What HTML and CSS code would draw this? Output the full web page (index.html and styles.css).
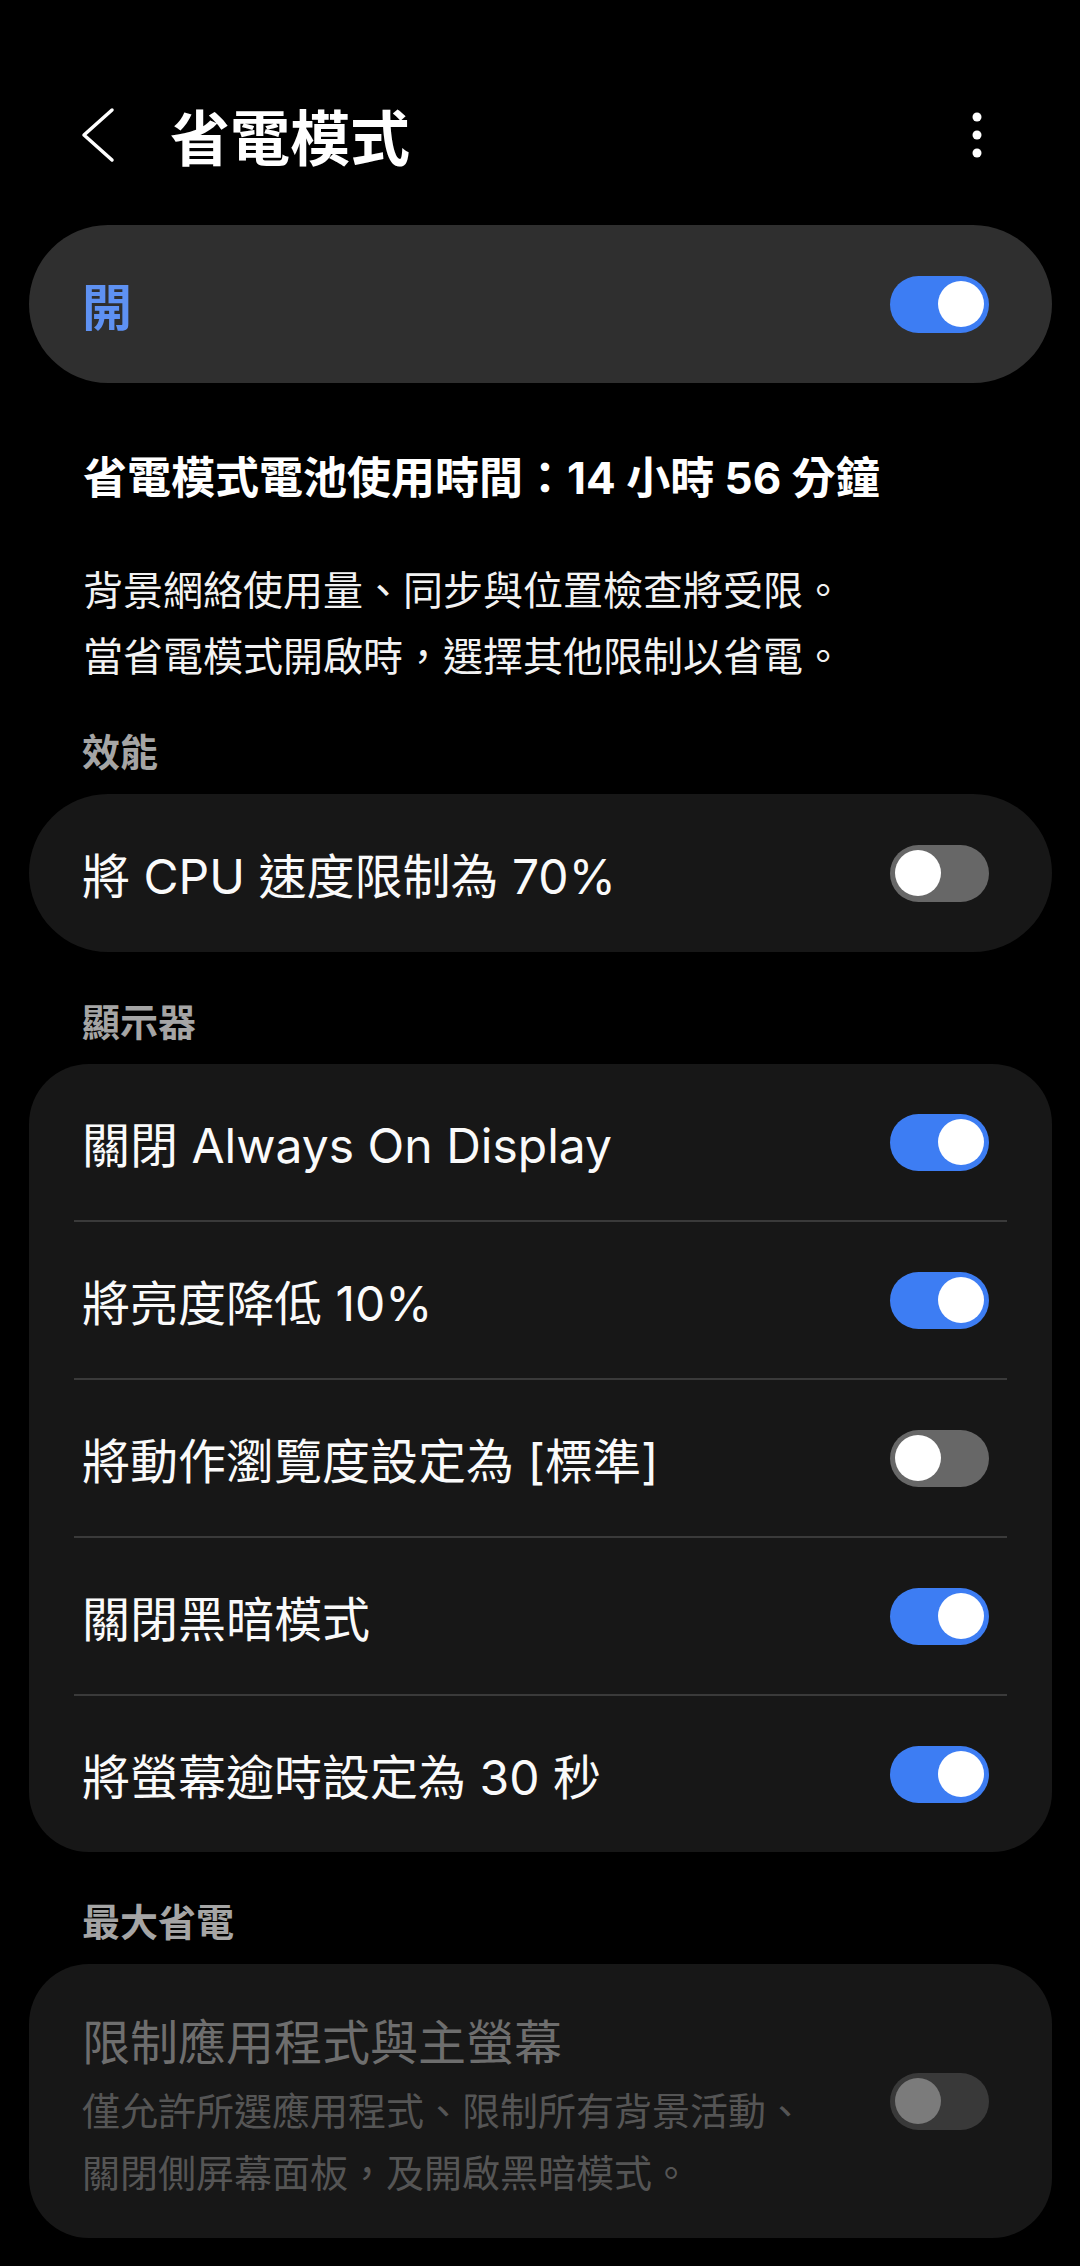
FILE: index.html
```html
<html>

<head>
  <meta name="viewport" content="width=device-width, initial-scale=1">
  <link rel="stylesheet" href="styles.css">
</head>

<body>
  <div class="screen">
    <!-- App bar -->
    <header class="app-bar">
      <svg class="back" width="36" height="56" viewBox="0 0 36 56">
        <polyline points="32,3 4,28 32,53" fill="none" stroke="#fff" stroke-width="3.5" stroke-linecap="round" stroke-linejoin="round" />
      </svg>
      <h1 class="title">省電模式</h1>
      <svg class="more" width="10" height="46" viewBox="0 0 10 46">
        <circle cx="5" cy="5" r="4.5" fill="#fff" />
        <circle cx="5" cy="23" r="4.5" fill="#fff" />
        <circle cx="5" cy="41" r="4.5" fill="#fff" />
      </svg>
    </header>

    <main class="content">
      <!-- Master switch -->
      <div class="master">
        <span class="master-label">開</span>
        <span class="switch on"></span>
      </div>

      <div class="intro">
        <p class="estimate">省電模式電池使用時間：14 小時 56 分鐘</p>
        <p class="desc">背景網絡使用量、同步與位置檢查將受限。<br>當省電模式開啟時，選擇其他限制以省電。</p>
      </div>

      <section class="section">
        <h2 class="section-label">效能</h2>
        <div class="card pill">
          <div class="row">
            <span class="row-text">將 CPU 速度限制為 70%</span>
            <span class="switch"></span>
          </div>
        </div>
      </section>

      <section class="section">
        <h2 class="section-label">顯示器</h2>
        <div class="card">
          <div class="row">
            <span class="row-text">關閉 Always On Display</span>
            <span class="switch on"></span>
          </div>
          <div class="divider"></div>
          <div class="row">
            <span class="row-text">將亮度降低 10%</span>
            <span class="switch on"></span>
          </div>
          <div class="divider"></div>
          <div class="row">
            <span class="row-text">將動作瀏覽度設定為 [標準]</span>
            <span class="switch"></span>
          </div>
          <div class="divider"></div>
          <div class="row">
            <span class="row-text">關閉黑暗模式</span>
            <span class="switch on"></span>
          </div>
          <div class="divider"></div>
          <div class="row">
            <span class="row-text">將螢幕逾時設定為 30 秒</span>
            <span class="switch on"></span>
          </div>
        </div>
      </section>

      <section class="section">
        <h2 class="section-label">最大省電</h2>
        <div class="card">
          <div class="row disabled">
            <div class="row-body">
              <div class="row-title">限制應用程式與主螢幕</div>
              <div class="row-sub">僅允許所選應用程式、限制所有背景活動、<br>關閉側屏幕面板，及開啟黑暗模式。</div>
            </div>
            <span class="switch off-disabled"></span>
          </div>
        </div>
      </section>
    </main>
  </div>
</body>

</html>
```

FILE: styles.css
```css
body {
  margin: 0;
  background: #000;
  color: #fafafa;
  font-family: Inter, "Noto Sans CJK TC", sans-serif;
}

.screen {
  width: 1080px;
  min-height: 2266px;
}

/* App bar */
.app-bar {
  display: flex;
  align-items: center;
  height: 112px;
  padding-top: 83px;
}

.back {
  margin-left: 80px;
  margin-bottom: 8px;
}

.title {
  margin: 0 0 0 54px;
  font-size: 60px;
  font-weight: 700;
  line-height: 80px;
  color: #fff;
}

.more {
  margin-left: auto;
  margin-right: 98px;
  margin-bottom: 8px;
}

.content {
  padding: 0 28px 0 29px;
}

/* Master switch card */
.master {
  display: flex;
  align-items: center;
  justify-content: space-between;
  height: 158px;
  margin-top: 30px;
  padding: 0 63px 0 53px;
  border-radius: 79px;
  background: #2f2f2f;
}

.master-label {
  font-size: 50px;
  font-weight: 700;
  color: #5e91f2;
}

.intro {
  margin: 65px 0 37px;
  padding: 0 54px;
}

.estimate {
  margin: 0;
  font-size: 44px;
  font-weight: 700;
  line-height: 60px;
  color: #fff;
}

.desc {
  margin: 50px 0 0;
  font-size: 40px;
  line-height: 66px;
  color: #f2f2f2;
}

.section + .section {
  margin-top: 45px;
}

.section-label {
  margin: 0 0 17px;
  padding: 0 53px;
  font-size: 38px;
  font-weight: 700;
  line-height: 50px;
  color: #a5a5a5;
}

.card {
  border-radius: 60px;
  background: #171717;
  overflow: hidden;
}

.card.pill {
  border-radius: 79px;
}

.row {
  display: flex;
  align-items: center;
  justify-content: space-between;
  height: 156px;
  padding: 0 63px 0 53px;
}

.pill .row {
  height: 158px;
}

.row-text {
  padding-top: 8px;
  font-size: 48px;
  line-height: 60px;
}

.divider {
  height: 2px;
  margin: 0 45px;
  background: #3a3a3a;
}

.row.disabled {
  height: auto;
  padding: 49px 63px 34px 53px;
}

.row-title {
  font-size: 48px;
  line-height: 60px;
  color: #6e6e6e;
}

.row-sub {
  margin-top: 7px;
  font-size: 38px;
  line-height: 62px;
  color: #555;
}

/* Switches */
.switch {
  display: flex;
  align-items: center;
  flex-shrink: 0;
  box-sizing: border-box;
  width: 99px;
  height: 57px;
  padding: 0 5px;
  border-radius: 29px;
  background: #676767;
}

.switch::after {
  content: '';
  width: 46px;
  height: 46px;
  border-radius: 50%;
  background: #fff;
}

.switch.on {
  justify-content: flex-end;
  background: #3d7df3;
}

.switch.off-disabled {
  margin-bottom: 15px;
  background: #393939;
}

.switch.off-disabled::after {
  background: #7b7b7b;
}
```
